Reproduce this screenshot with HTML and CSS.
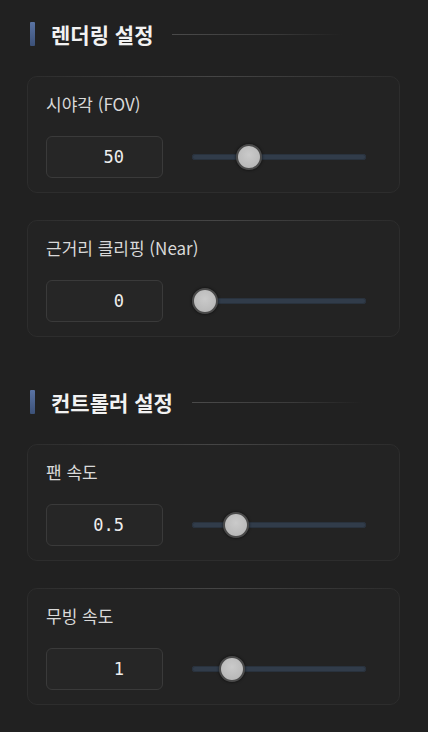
FILE: index.html
```html
<!DOCTYPE html>
<html lang="ko">
<head>
<meta charset="utf-8">
<title>설정</title>
<link rel="stylesheet" href="styles.css">
</head>
<body>

<!-- 렌더링 -->
<div class="section">
    <div class="sectionHeader">
        <span class="headerBar"></span>
        <span class="headerTitle">렌더링 설정</span>
        <span class="headerLine"></span>
    </div>

    <div class="card">
        <div class="cardLabel">시야각 (FOV)</div>
        <div class="cardRow">
            <input type="text" class="valueBox" value="50">
            <input type="range" class="slider" min="20" max="120" step="1" value="50">
        </div>
    </div>

    <div class="card">
        <div class="cardLabel">근거리 클리핑 (Near)</div>
        <div class="cardRow">
            <input type="text" class="valueBox" value="0">
            <input type="range" class="slider" min="0" max="10" step="0.1" value="0">
        </div>
    </div>
</div>

<!-- 컨트롤러 -->
<div class="section">
    <div class="sectionHeader">
        <span class="headerBar"></span>
        <span class="headerTitle">컨트롤러 설정</span>
        <span class="headerLine"></span>
    </div>

    <div class="card">
        <div class="cardLabel">팬 속도</div>
        <div class="cardRow">
            <input type="text" class="valueBox" value="0.5">
            <input type="range" class="slider" min="0.1" max="2" step="0.1" value="0.5">
        </div>
    </div>

    <div class="card">
        <div class="cardLabel">무빙 속도</div>
        <div class="cardRow">
            <input type="text" class="valueBox" value="1">
            <input type="range" class="slider" min="0.1" max="5" step="0.1" value="1">
        </div>
    </div>
</div>

</body>
</html>
```

FILE: styles.css
```css
/* 다크 설정 패널 */
body
{
    margin:             0;
    padding:            22px 28px 0 27px;
    background-color:   #212121;
    font-family:        "Noto Sans CJK KR", "Noto Sans", sans-serif;
    color:              #dcdcdc;
}

.section
{
    display:            flex;
    flex-direction:     column;
    gap:                27px;
    margin-bottom:      53px;
}

.sectionHeader
{
    display:            flex;
    align-items:        center;
    height:             24px;
    padding-left:       3px;
    margin-bottom:      3px;
}

.headerBar
{
    width:              5px;
    height:             24px;
    border-radius:      1px;
    background:         linear-gradient(to bottom, #5a73a3, #3c5178);
}

.headerTitle
{
    margin-left:        16px;
    font-size:          21px;
    font-weight:        bold;
    color:              #f2f2f2;
    line-height:        24px;
}

.headerLine
{
    width:              170px;
    height:             1px;
    margin-left:        19px;
    background:         linear-gradient(to right, #4a4a4a, #3a3a3a 60%, rgba(60,60,60,0));
}

.card
{
    position:           relative;
    padding:            16px 19px 14px 18px;
    border:             1px solid #2d2d2d;
    border-radius:      10px;
    background-color:   #232323;
}

/* 상단 하이라이트 */
.card::before
{
    content:            "";
    position:           absolute;
    top:                -1px;
    left:               10px;
    right:              10px;
    height:             1px;
    background:         linear-gradient(to right, rgba(70,70,70,0), #454545 50%, rgba(70,70,70,0));
}

.cardLabel
{
    font-size:          17px;
    line-height:        22px;
    color:              #d9d9d9;
}

.cardRow
{
    display:            flex;
    align-items:        center;
    margin-top:         21px;
}

.valueBox
{
    box-sizing:         border-box;
    width:              117px;
    height:             42px;
    padding:            0 38px 0 0;
    border:             1px solid #3a3a3a;
    border-radius:      6px;
    background-color:   #262626;
    color:              #eeeeee;
    font-family:        "DejaVu Sans Mono", "Liberation Mono", monospace;
    font-size:          17px;
    text-align:         right;
    outline:            none;
}

.slider
{
    -webkit-appearance: none;
    appearance:         none;
    flex:               1;
    height:             28px;
    margin:             0 14px 0 29px;
    background:         transparent;
}

.slider::-webkit-slider-runnable-track
{
    height:             6px;
    border-radius:      3px;
    background-color:   #313c4a;
    box-shadow:         inset 0 0 0 1px #29323d;
}

.slider::-webkit-slider-thumb
{
    -webkit-appearance: none;
    box-sizing:         border-box;
    width:              26px;
    height:             26px;
    margin-top:         -10px;
    border-radius:      50%;
    border:             2px solid #4a4a4a;
    background:         radial-gradient(circle at 50% 40%, #cacaca, #b2b2b2);
    box-shadow:         0 0 3px rgba(0,0,0,0.7);
}
```
